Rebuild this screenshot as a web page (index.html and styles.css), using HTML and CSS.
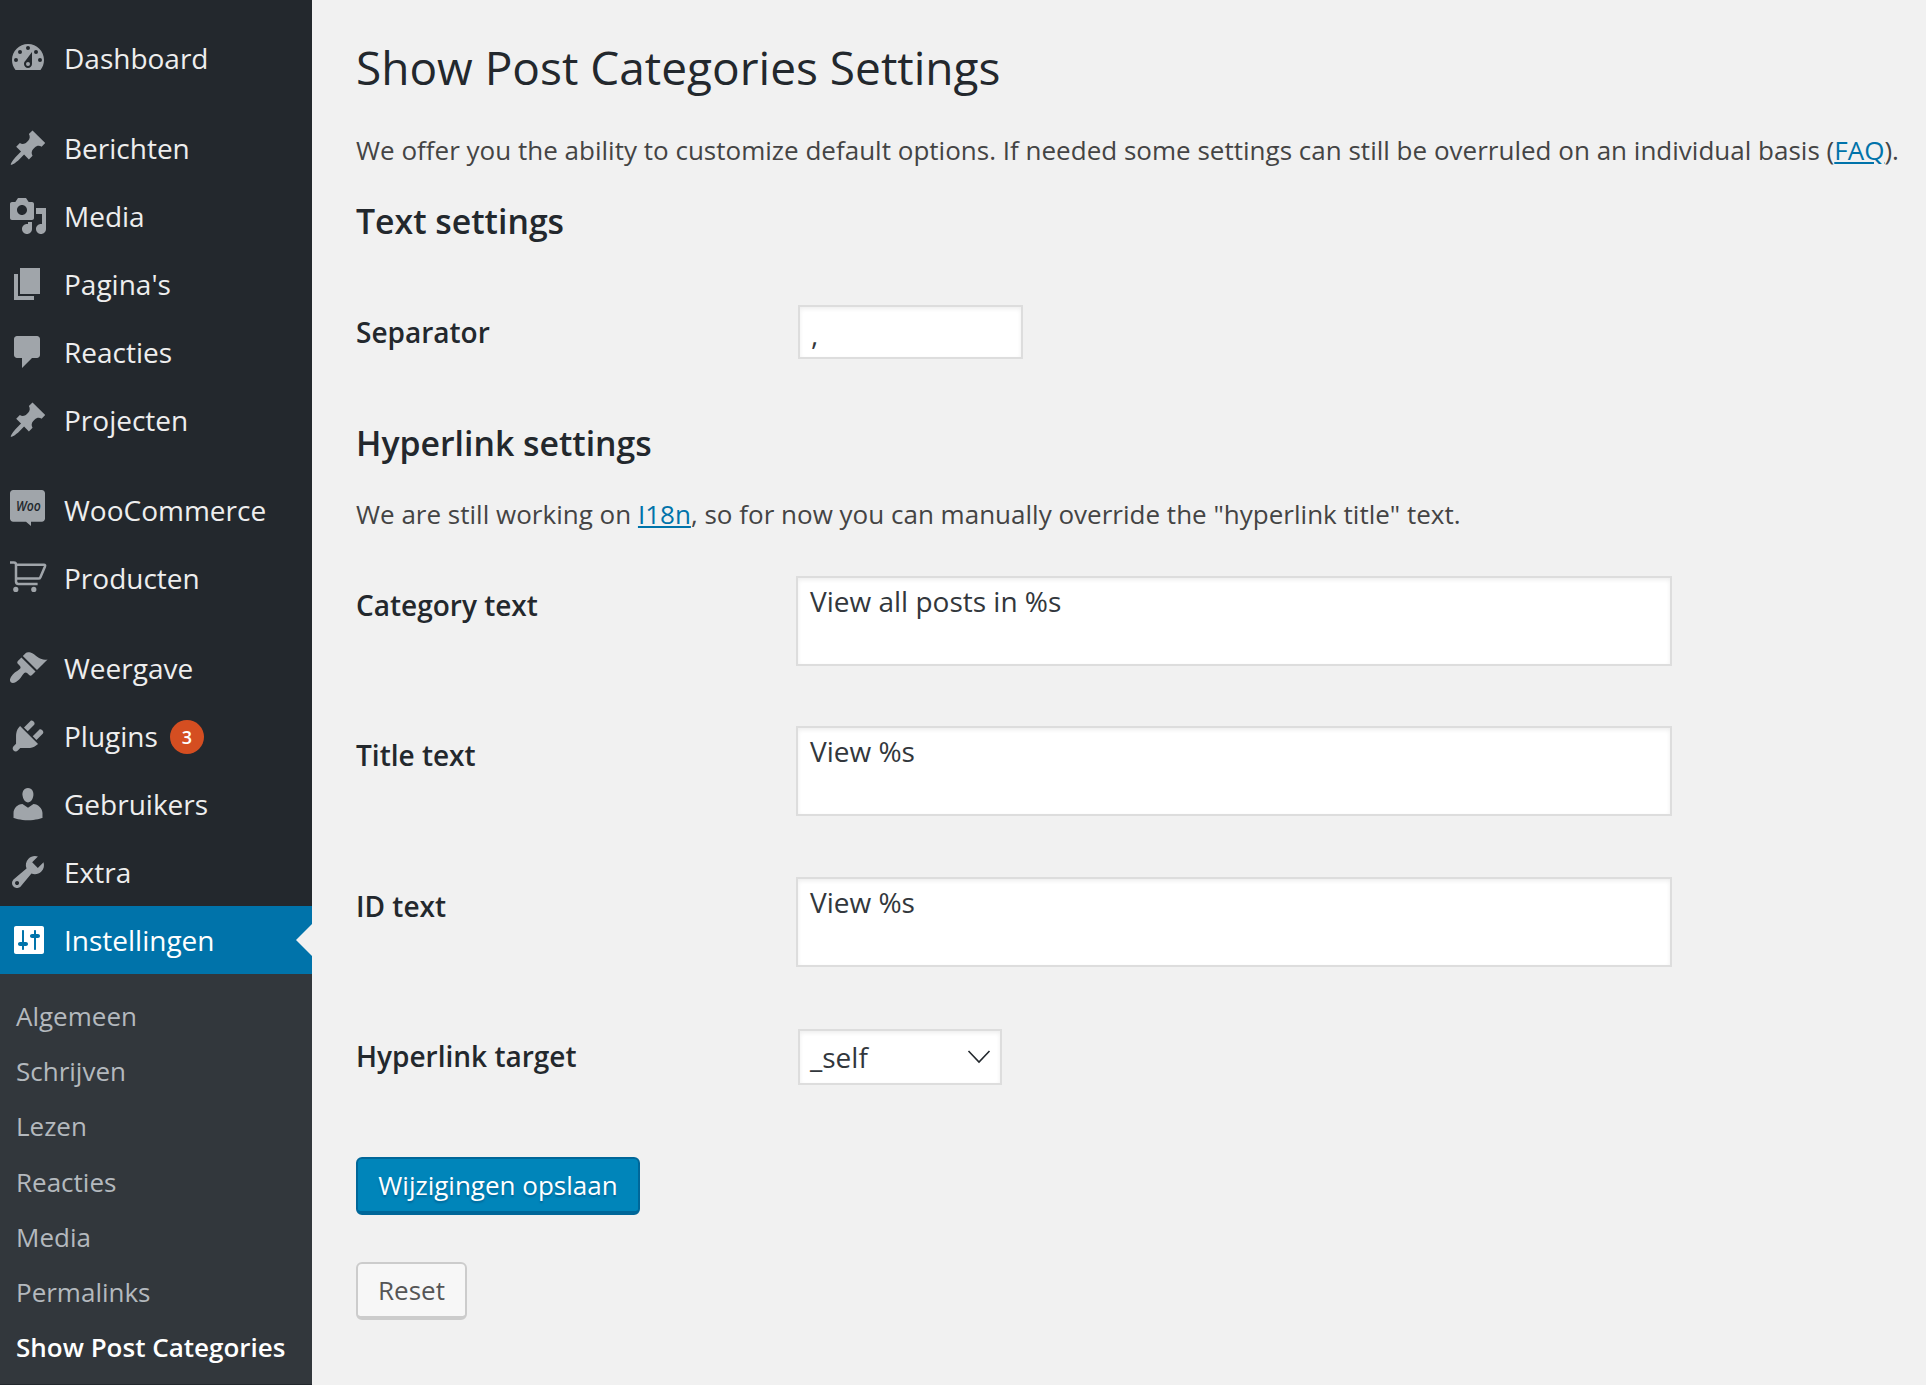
FILE: index.html
```html
<!DOCTYPE html>
<html lang="nl">
<head>
<meta charset="utf-8">
<title>Show Post Categories Settings</title>
<link rel="stylesheet" href="styles.css">
</head>
<body>
<div class="admin">
  <nav class="sidebar">
    <ul class="menu">
      <li class="menu-item"><svg class="icon" viewBox="0 0 20 20"><path fill-rule="evenodd" d="M3.76 16h12.48c1.1-1.37 1.76-3.11 1.76-5 0-4.42-3.58-8-8-8s-8 3.58-8 8c0 1.89.66 3.63 1.76 5zM10 4a1 1 0 1 1 0 2 1 1 0 0 1 0-2zM6 6a1 1 0 1 1 0 2 1 1 0 0 1 0-2zm8 0a1 1 0 1 1 0 2 1 1 0 0 1 0-2zm-5.37 5.55L12 7v6c0 1.1-.9 2-2 2s-2-.9-2-2c0-.57.24-1.08.63-1.45zM4 10a1 1 0 1 1 0 2 1 1 0 0 1 0-2zm12 0a1 1 0 1 1 0 2 1 1 0 0 1 0-2zm-6 2a1 1 0 1 0 0 2 1 1 0 0 0 0-2z"/></svg><span>Dashboard</span></li>
      <li class="separator"></li>
      <li class="menu-item"><svg class="icon" viewBox="0 0 20 20"><path d="M10.44 3.02l1.82-1.82 6.36 6.35-1.83 1.82c-1.05-.68-2.48-.57-3.41.36l-.75.75c-.92.93-1.04 2.35-.35 3.41l-1.83 1.82-2.41-2.41-2.8 2.79c-.42.42-3.38 2.71-3.8 2.29s1.86-3.39 2.28-3.81l2.79-2.79L4.1 9.36l1.83-1.82c1.05.69 2.48.57 3.4-.36l.75-.75c.93-.92 1.05-2.35.36-3.41z"/></svg><span>Berichten</span></li>
      <li class="menu-item"><svg class="icon" viewBox="0 0 20 20"><path fill-rule="evenodd" d="M13 11V4c0-.55-.45-1-1-1h-1.67L9 1H5L3.67 3H2c-.55 0-1 .45-1 1v7c0 .55.45 1 1 1h10c.55 0 1-.45 1-1zM7 4.5c1.38 0 2.5 1.12 2.5 2.5S8.38 9.5 7 9.5 4.5 8.38 4.5 7 5.62 4.5 7 4.5zM14 6h5v10.5c0 1.38-1.12 2.5-2.5 2.5S14 17.88 14 16.5s1.12-2.5 2.5-2.5c.17 0 .34.02.5.05V9h-3V6zm-4 8.05V13h2v3.5c0 1.38-1.12 2.5-2.5 2.5S7 17.88 7 16.5 8.12 14 9.5 14c.17 0 .34.02.5.05z"/></svg><span>Media</span></li>
      <li class="menu-item"><svg class="icon" viewBox="0 0 20 20"><path d="M6 15V2h10v13H6zm-1 1h8v2H3V5h2v11z"/></svg><span>Pagina's</span></li>
      <li class="menu-item"><svg class="icon" viewBox="0 0 20 20"><path d="M4.5 2h10c.83 0 1.5.67 1.5 1.5v8c0 .83-.67 1.5-1.5 1.5H12l-5 5v-5H4.5C3.67 13 3 12.33 3 11.5v-8C3 2.67 3.67 2 4.5 2z"/></svg><span>Reacties</span></li>
      <li class="menu-item"><svg class="icon" viewBox="0 0 20 20"><path d="M10.44 3.02l1.82-1.82 6.36 6.35-1.83 1.82c-1.05-.68-2.48-.57-3.41.36l-.75.75c-.92.93-1.04 2.35-.35 3.41l-1.83 1.82-2.41-2.41-2.8 2.79c-.42.42-3.38 2.71-3.8 2.29s1.86-3.39 2.28-3.81l2.79-2.79L4.1 9.36l1.83-1.82c1.05.69 2.48.57 3.4-.36l.75-.75c.93-.92 1.05-2.35.36-3.41z"/></svg><span>Projecten</span></li>
      <li class="separator"></li>
      <li class="menu-item"><svg class="icon" viewBox="0 0 20 20"><path d="M2.6 0h14.3c.9 0 1.6.7 1.6 1.6v12.7c0 .9-.7 1.6-1.6 1.6h-5.4V18L9 15.9H2.6c-.9 0-1.6-.7-1.6-1.6V1.6C1 .7 1.7 0 2.6 0z"/><text class="woo" x="4" y="10.6" textLength="12.4" lengthAdjust="spacingAndGlyphs">Woo</text></svg><span>WooCommerce</span></li>
      <li class="menu-item"><svg class="icon" viewBox="0 0 20 20"><path class="line" d="M1 2.2h1.9c.7 0 1.1.4 1.1 1.1v8.5c0 .8.4 1.2 1.2 1.2h9.6M4 3.4h14c.5 0 .7.3.5.8l-2.3 5.4c-.2.5-.5.7-1 .7H4"/><circle cx="3.9" cy="15.7" r="1.3"/><circle cx="12.9" cy="15.7" r="1.3"/></svg><span>Producten</span></li>
      <li class="separator"></li>
      <li class="menu-item"><svg class="icon" viewBox="0 0 20 20"><path d="M14.48 11.06L7.41 3.99l1.5-1.5c.5-.56 2.3-.47 3.51.32 1.21.8 1.43 1.28 2.91 2.1 1.18.64 2.45 1.26 4.45.85zm-.71.71L6.7 4.7 4.93 6.47c-.39.39-.39 1.02 0 1.41l1.06 1.06c.39.39.39 1.03 0 1.42-.6.6-1.43 1.11-2.21 1.69-.35.26-.7.53-1.01.84C1.43 14.23.4 16.08 1.4 17.07c.99 1 2.84-.03 4.18-1.36.31-.31.58-.66.85-1.02.57-.78 1.08-1.61 1.69-2.21.39-.39 1.02-.39 1.41 0l1.06 1.06c.39.39 1.02.39 1.41 0z"/></svg><span>Weergave</span></li>
      <li class="menu-item"><svg class="icon" viewBox="0 0 20 20"><path d="M13.11 4.36L9.87 7.6 8 5.73l3.24-3.24c.35-.34 1.05-.2 1.56.32.52.51.66 1.21.31 1.55zm-8 1.77l.91-1.12 9.01 9.01-1.19.84c-.71.71-2.63 1.16-3.82 1.16H6.14L4.9 17.26c-.59.59-1.54.59-2.12 0-.59-.58-.59-1.53 0-2.12l1.24-1.24v-3.88c0-1.13.4-3.19 1.09-3.89zm7.26 3.97l3.24-3.24c.34-.35 1.04-.21 1.55.31.52.51.66 1.21.31 1.55l-3.24 3.25z"/></svg><span>Plugins</span><span class="count">3</span></li>
      <li class="menu-item"><svg class="icon" viewBox="0 0 20 20"><path d="M10 9.25c-2.27 0-2.73-3.44-2.73-3.44C7 4.02 7.82 2 9.97 2c2.16 0 2.98 2.02 2.71 3.81 0 0-.41 3.44-2.68 3.44zm0 2.57L12.72 10c2.39 0 4.52 2.33 4.52 4.53v2.49s-3.65 1.13-7.24 1.13c-3.65 0-7.24-1.13-7.24-1.13v-2.49c0-2.25 1.94-4.48 4.47-4.48z"/></svg><span>Gebruikers</span></li>
      <li class="menu-item"><svg class="icon" viewBox="0 0 20 20"><path fill-rule="evenodd" d="M16.68 9.77c-1.34 1.34-3.3 1.67-4.95.99l-5.41 6.52c-.99.99-2.59.99-3.58 0s-.99-2.59 0-3.57l6.52-5.42c-.68-1.65-.35-3.61.99-4.95 1.28-1.28 3.12-1.62 4.72-1.06l-2.89 2.89 2.82 2.82 2.86-2.87c.53 1.58.18 3.39-1.08 4.65zM3.81 16.21c.4.39 1.04.39 1.43 0 .4-.4.4-1.04 0-1.43-.39-.4-1.03-.4-1.43 0-.39.39-.39 1.03 0 1.43z"/></svg><span>Extra</span></li>
      <li class="menu-item current"><svg class="icon" viewBox="0 0 20 20"><path fill-rule="evenodd" d="M18 16V4c0-.55-.45-1-1-1H4c-.55 0-1 .45-1 1v12c0 .55.45 1 1 1h13c.55 0 1-.45 1-1zM8 11h1c.55 0 1 .45 1 1s-.45 1-1 1H8v1.5c0 .28-.22.5-.5.5s-.5-.22-.5-.5V13H6c-.55 0-1-.45-1-1s.45-1 1-1h1V5.5c0-.28.22-.5.5-.5s.5.22.5.5V11zm5-2h-1c-.55 0-1-.45-1-1s.45-1 1-1h1V5.5c0-.28.22-.5.5-.5s.5.22.5.5V7h1c.55 0 1 .45 1 1s-.45 1-1 1h-1v5.500c0 .28-.22.5-.5.5s-.5-.22-.5-.5V9z"/></svg><span>Instellingen</span></li>
    </ul>
    <ul class="submenu">
      <li>Algemeen</li>
      <li>Schrijven</li>
      <li>Lezen</li>
      <li>Reacties</li>
      <li>Media</li>
      <li>Permalinks</li>
      <li class="active">Show Post Categories</li>
    </ul>
  </nav>
  <main class="content">
    <h1>Show Post Categories Settings</h1>
    <p class="intro">We offer you the ability to customize default options. If needed some settings can still be overruled on an individual basis (<a href="#">FAQ</a>).</p>
    <h2 class="text-heading">Text settings</h2>
    <div class="row row-separator">
      <label for="separator">Separator</label>
      <input class="field" id="separator" type="text" value=",">
    </div>
    <h2 class="link-heading">Hyperlink settings</h2>
    <p class="note">We are still working on <a href="#">I18n</a>, so for now you can manually override the "hyperlink title" text.</p>
    <div class="row row-area">
      <label for="category">Category text</label>
      <textarea class="field" id="category">View all posts in %s</textarea>
    </div>
    <div class="row row-area">
      <label for="title">Title text</label>
      <textarea class="field" id="title">View %s</textarea>
    </div>
    <div class="row row-area">
      <label for="ident">ID text</label>
      <textarea class="field" id="ident">View %s</textarea>
    </div>
    <div class="row row-select">
      <label>Hyperlink target</label>
      <div class="field select"><span>_self</span><svg class="chevron" viewBox="0 0 24 16"><path d="M1.5 2L12 13 22.500 2"/></svg></div>
    </div>
    <div class="actions">
      <button class="button primary">Wijzigingen opslaan</button>
      <button class="button">Reset</button>
    </div>
  </main>
</div>
</body>
</html>
```
FILE: styles.css
```css
* {
  box-sizing: border-box;
}

body {
  margin: 0;
  background: #f1f1f1;
  color: #444;
  font: 26px/1.5 "Open Sans", sans-serif;
}

.admin {
  display: flex;
  height: 1385px;
  overflow: hidden;
}

.sidebar {
  flex: none;
  width: 312px;
  background: #23282d;
}

.menu,
.submenu {
  margin: 0;
  padding: 0;
  list-style: none;
}

.menu {
  padding-top: 24px;
}

.menu-item {
  display: flex;
  align-items: center;
  height: 68px;
  padding-left: 8px;
  color: #eee;
  font-size: 28px;
  line-height: 36px;
}

.separator {
  height: 22px;
}

.icon {
  width: 40px;
  height: 40px;
  margin-right: 16px;
  fill: #a0a5aa;
}

.icon .line {
  fill: none;
  stroke: #a0a5aa;
  stroke-width: 1.25;
}

.icon .woo {
  fill: #23282d;
  font: italic 600 7.6px "Open Sans", sans-serif;
}

.count {
  width: 34px;
  height: 34px;
  margin-top: 1px;
  margin-left: 12px;
  border-radius: 50%;
  background: #d54e21;
  color: #fff;
  font-size: 18px;
  font-weight: 600;
  line-height: 34px;
  text-align: center;
}

.current {
  position: relative;
  background: #0073aa;
  color: #fff;
}

.current .icon {
  fill: #fff;
}

.current::after {
  content: "";
  position: absolute;
  top: 18px;
  right: 0;
  border: 16px solid transparent;
  border-left: 0;
  border-right-color: #f1f1f1;
}

.submenu {
  height: 410px;
  padding-top: 15px;
  background: #32373c;
}

.submenu li {
  padding: 12px 0 12px 16px;
  color: #b4b9be;
  line-height: 31.2px;
}

.submenu .active {
  color: #fff;
  font-weight: 600;
}

.content {
  flex: 1;
  padding: 38px 0 0 44px;
  white-space: nowrap;
}

h1,
h2,
p {
  margin: 0;
}

p {
  letter-spacing: 0.01px;
}

h1 {
  height: 93px;
  color: #23282d;
  font-size: 46px;
  font-weight: 400;
  line-height: 58px;
}

a {
  color: #0073aa;
}

h2 {
  color: #23282d;
  font-size: 33.8px;
  font-weight: 600;
  line-height: 46px;
}

.text-heading {
  margin-top: 28px;
}

.link-heading {
  margin-top: 61px;
}

.note {
  margin-top: 29px;
}

.row {
  display: flex;
  align-items: flex-start;
}

.row label {
  width: 442px;
  color: #23282d;
  font-size: 28px;
  font-weight: 600;
  line-height: 36px;
}

.field {
  margin: 0;
  border: 2px solid #ddd;
  border-radius: 0;
  background: #fff;
  box-shadow: inset 0 2px 4px rgba(0, 0, 0, 0.07);
  color: #32373c;
  font: 28px/38px "Open Sans", sans-serif;
  outline: 0;
}

.row-separator {
  margin-top: 61px;
}

.row-separator label {
  margin-top: 9px;
}

input.field {
  width: 225px;
  height: 54px;
  padding: 4px 11px 0;
}

.row-area {
  height: 150.4px;
}

.note + .row-area {
  margin-top: 42px;
}

.row-area label {
  width: 440px;
  margin-top: 11px;
}

textarea.field {
  width: 876px;
  height: 90px;
  padding: 4px 12px;
  resize: none;
}

.row-select {
  margin-top: 1.8px;
}

.row-select label {
  margin-top: 9px;
}

.select {
  display: flex;
  align-items: center;
  justify-content: space-between;
  width: 204px;
  height: 56px;
  padding: 0 9px 0 10px;
}

.chevron {
  width: 24px;
  height: 16px;
  fill: none;
  stroke: #23282d;
  stroke-width: 1.6;
}

.actions {
  display: flex;
  flex-direction: column;
  align-items: flex-start;
  gap: 47px;
  margin-top: 72px;
}

.button {
  height: 58px;
  padding: 0 20px 2px;
  border: 2px solid #ccc;
  border-bottom-width: 4px;
  border-radius: 6px;
  background: #f7f7f7;
  color: #555;
  font: 26px/52px "Open Sans", sans-serif;
}

.primary {
  width: 284px;
  border-color: #006799;
  background: #0085ba;
  color: #fff;
  text-shadow: 0 2px 2px #006799;
}
```
